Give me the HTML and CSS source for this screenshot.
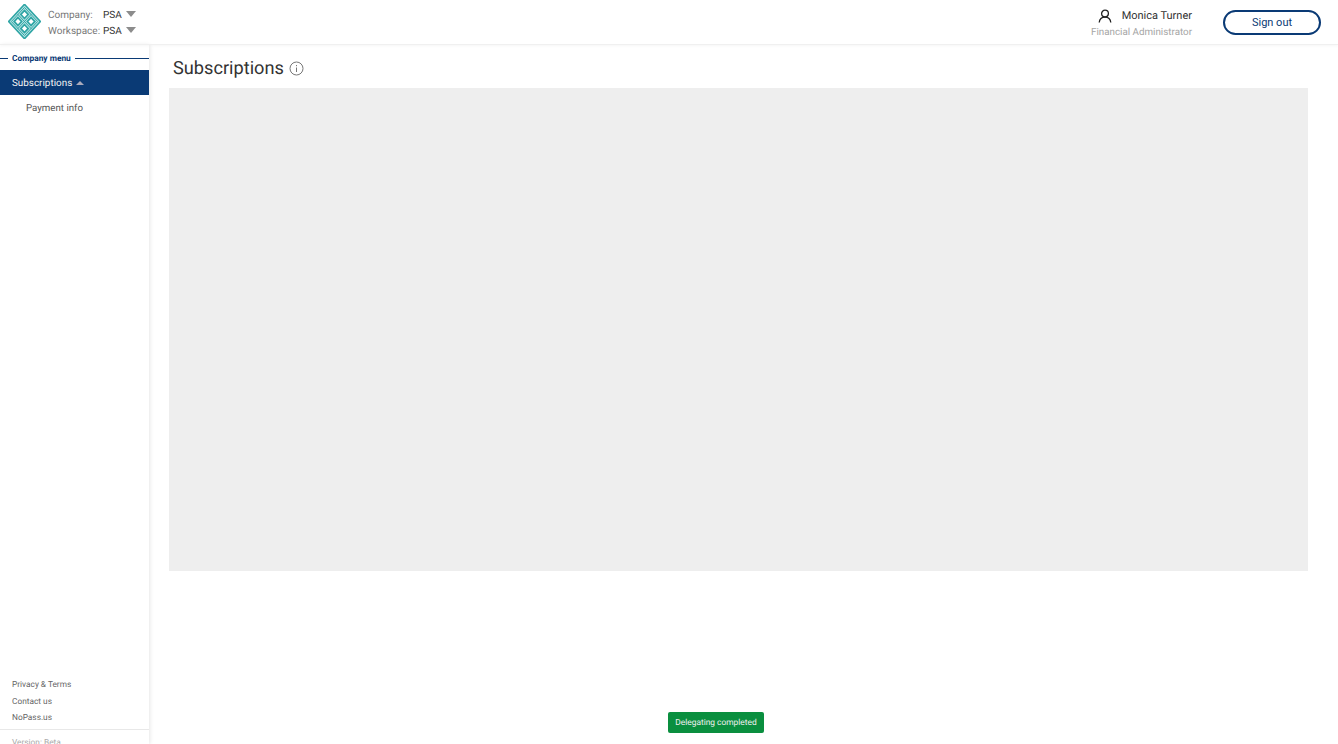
FILE: index.html
```html
<!DOCTYPE html>
<html lang="en">
<head>
    <meta charset="UTF-8">
    <title>Subscriptions</title>
    <link rel="stylesheet" href="styles.css">
</head>
<body>
    <header class="topbar">
        <svg class="logo" viewBox="0 0 34 36" width="33" height="35" fill="none">
            <g stroke="#2fa5a5" stroke-width="6">
                <path d="M17 3.5 L30.5 18 L17 32.5 L3.5 18 Z"/>
                <path d="M10 10.5 L24 25.5 M24 10.5 L10 25.5"/>
            </g>
            <g stroke="#b4e2e2" stroke-width="2.6">
                <path d="M17 3.5 L30.5 18 L17 32.5 L3.5 18 Z"/>
                <path d="M10 10.5 L24 25.5 M24 10.5 L10 25.5"/>
            </g>
            <g stroke="#2fa5a5" stroke-width="1">
                <path d="M17 3.5 L30.5 18 L17 32.5 L3.5 18 Z"/>
                <path d="M10 10.5 L24 25.5 M24 10.5 L10 25.5"/>
            </g>
        </svg>
        <div class="selectors">
            <div class="selector">
                <span class="selector-label">Company:</span>
                <span class="selector-value">PSA</span>
                <span class="arrow-down"></span>
            </div>
            <div class="selector">
                <span class="selector-label">Workspace:</span>
                <span class="selector-value">PSA</span>
                <span class="arrow-down"></span>
            </div>
        </div>
        <div class="user">
            <div class="user-name">
                <svg viewBox="0 0 14 14" width="14" height="14" fill="none" stroke="#222" stroke-width="1.3">
                    <circle cx="7" cy="4.6" r="3.4"/>
                    <path d="M1.2 13.5 C1.6 10 4 8.2 7 8.2 C10 8.2 12.4 10 12.8 13.5"/>
                </svg>
                <span>Monica Turner</span>
            </div>
            <div class="user-role">Financial Administrator</div>
        </div>
        <button class="signout">Sign out</button>
    </header>
    <div class="layout">
        <aside class="sidebar">
            <div class="menu-title"><span>Company menu</span></div>
            <div class="menu-active">Subscriptions <span class="arrow-up"></span></div>
            <div class="menu-item">Payment info</div>
            <div class="side-links">
                <div>Privacy &amp; Terms</div>
                <div>Contact us</div>
                <div>NoPass.us</div>
            </div>
            <div class="version">Version: Beta</div>
        </aside>
        <main class="content">
            <div class="page-title">
                <h1>Subscriptions</h1>
                <svg viewBox="0 0 15 15" width="15" height="15" fill="none" stroke="#777">
                    <circle cx="7.5" cy="7.5" r="6.5"/>
                    <path d="M7.5 6.5 V11 M7.5 4 V5.2"/>
                </svg>
            </div>
            <div class="placeholder"></div>
        </main>
    </div>
    <div class="toast">Delegating completed</div>
</body>
</html>
```

FILE: styles.css
```css
html, body {
    height: 100%;
}
body {
    margin: 0;
    font-family: Roboto, sans-serif;
    text-rendering: geometricPrecision;
    background: #fff;
    color: #222;
    overflow: hidden;
    display: flex;
    flex-direction: column;
}
.topbar {
    height: 45px;
    flex: none;
    box-sizing: border-box;
    display: flex;
    align-items: center;
    padding: 0 17px 0 8px;
    border-bottom: 1px solid #f0f0f0;
    box-shadow: 0 1px 3px rgba(0, 0, 0, 0.04);
    position: relative;
    z-index: 2;
}
.logo {
    margin-top: -1px;
}
.selectors {
    margin-left: 7px;
    display: flex;
    flex-direction: column;
    gap: 2px;
    margin-top: 2px;
}
.selector {
    display: flex;
    align-items: center;
    height: 14px;
    font-size: 10px;
}
.selector-label {
    width: 55px;
    color: #777;
}
.selector-value {
    width: 23px;
    color: #333;
}
.arrow-down {
    width: 0;
    height: 0;
    margin-top: -2px;
    border-left: 5px solid transparent;
    border-right: 5px solid transparent;
    border-top: 6px solid #8c8c8c;
}
.user {
    margin-left: auto;
    margin-top: 2px;
    display: flex;
    flex-direction: column;
    align-items: flex-end;
    gap: 4px;
}
.user-name {
    display: flex;
    align-items: center;
    gap: 10px;
    font-size: 11px;
    color: #333;
}
.user-role {
    font-size: 9.8px;
    color: #a5a5a5;
}
.signout {
    margin-left: 31px;
    width: 98px;
    height: 25px;
    border: 2px solid #0a3a75;
    border-radius: 13px;
    background: #fff;
    color: #0a3a75;
    font-family: Roboto, sans-serif;
    font-size: 11px;
    padding: 0;
}
.layout {
    flex: 1;
    display: flex;
    min-height: 0;
}
.sidebar {
    width: 149px;
    flex: none;
    display: flex;
    flex-direction: column;
    box-shadow: 1px 0 4px rgba(0, 0, 0, 0.1);
    padding-top: 7px;
    box-sizing: border-box;
}
.menu-title {
    display: flex;
    align-items: center;
    height: 12px;
    padding-top: 1px;
    margin-bottom: -1px;
    font-size: 8.4px;
    font-weight: 700;
    color: #0a3a75;
}
.menu-title::before {
    content: "";
    width: 8px;
    height: 1px;
    margin-top: -1px;
    background: #0a3a75;
    margin-right: 4px;
}
.menu-title::after {
    content: "";
    flex: 1;
    height: 1px;
    margin-top: -1px;
    background: #0a3a75;
    margin-left: 4px;
}
.menu-active {
    margin-top: 6px;
    padding-top: 1px;
    height: 25px;
    flex: none;
    box-sizing: border-box;
    display: flex;
    align-items: center;
    gap: 4px;
    padding-left: 12px;
    background: #0a3a75;
    color: #f4f4f4;
    font-size: 9.9px;
}
.arrow-up {
    width: 0;
    height: 0;
    margin-top: -1px;
    border-left: 4px solid transparent;
    border-right: 4px solid transparent;
    border-bottom: 4px solid #aab;
}
.menu-item {
    padding: 8px 0 0 26px;
    font-size: 9.7px;
    line-height: 12px;
    color: #555;
}
.side-links {
    margin-top: auto;
    padding-left: 12px;
    display: flex;
    flex-direction: column;
    gap: 6.5px;
    font-size: 8.3px;
    line-height: 10px;
    color: #666;
}
.version {
    margin-top: 6px;
    height: 15px;
    flex: none;
    border-top: 1px solid #e8e8e8;
    padding: 8px 0 0 12px;
    font-size: 8.3px;
    line-height: 10px;
    color: #aaa;
    box-sizing: border-box;
}
.content {
    flex: 1;
    min-width: 0;
    padding: 0 30px 0 20px;
}
.page-title {
    height: 43px;
    padding-left: 4px;
    display: flex;
    align-items: center;
    gap: 5px;
}
.page-title h1 {
    margin: 0;
    font-size: 18.2px;
    font-weight: 400;
    color: #333;
    padding-top: 4px;
}
.page-title svg {
    margin-top: 3px;
}
.placeholder {
    height: 482.5px;
    background: #eee;
}
.toast {
    position: absolute;
    left: 668px;
    top: 712px;
    width: 96px;
    height: 21px;
    display: flex;
    align-items: center;
    justify-content: center;
    background: #0a8f3f;
    border-radius: 2px;
    color: #f0f0f0;
    font-size: 8.4px;
}
```
